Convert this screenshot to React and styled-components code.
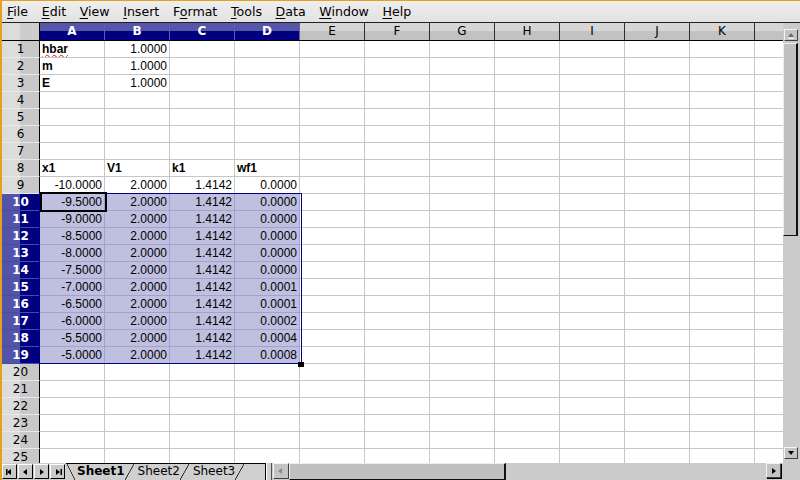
import React from "react";
import styled, { createGlobalStyle } from "styled-components";

// Spreadsheet window: menu bar, cell grid with headers, scrollbars, sheet tabs

const GlobalStyle = createGlobalStyle`
  html, body {
    margin: 0;
    padding: 0;
    width: 800px;
    height: 480px;
    overflow: hidden;
    background: #d4d4d4;
  }
  * {
    box-sizing: border-box;
  }
`;

const COLS = ["A", "B", "C", "D", "E", "F", "G", "H", "I", "J", "K", "L"];
const SEL_COLS = 4;
const SEL_FROM = 10;
const SEL_TO = 19;

const Window = styled.div`
  width: 800px;
  height: 480px;
  display: flex;
  flex-direction: column;
  border-top: 1px solid #e4a11b;
  border-left: 2px solid #e4a11b;
  background: #d2d2d2;
  overflow: hidden;
  font-family: "DejaVu Sans", sans-serif;
`;

const MenuBar = styled.div`
  height: 21px;
  flex: none;
  display: flex;
  align-items: center;
  padding-top: 1px;
  background: linear-gradient(#eeeeee, #e2e2e2);
  font-size: 12.6px;
  color: #000;
`;

const MenuItem = styled.span`
  padding: 0 6.8px;
  line-height: 16px;
  white-space: nowrap;
  &:first-child {
    padding-left: 5px;
  }
`;

const Key = styled.span`
  text-decoration: underline;
  text-underline-offset: 2px;
  text-decoration-thickness: 1px;
`;

const Main = styled.div`
  flex: 1;
  min-height: 0;
  display: flex;
  border-top: 1px solid #202020;
`;

const Sheet = styled.div`
  flex: 1;
  min-width: 0;
  position: relative;
  overflow: hidden;
  background: #ffffff;
`;

const HeaderRow = styled.div`
  display: flex;
  height: 18px;
  border-bottom: 1px solid #000;
`;

const Corner = styled.div`
  flex: none;
  width: 38px;
  height: 100%;
  border-right: 1px solid #000;
  background: linear-gradient(to right, #dcdcdc 50%, #cdcdcd 50%);
`;

const ColHeader = styled.div`
  flex: none;
  width: 65px;
  height: 100%;
  border-right: 1px solid ${(p) => (p.$sel ? "#5e5eae" : "#2e2e2e")};
  background: ${(p) =>
    p.$sel
      ? "linear-gradient(#5656a8 0 47%, #000080 47%)"
      : "linear-gradient(#d6d6d6 0 47%, #c2c2c2 47%)"};
  color: ${(p) => (p.$sel ? "#fff" : "#000")};
  font-weight: ${(p) => (p.$sel ? "bold" : "normal")};
  font-size: 12px;
  line-height: 17px;
  text-align: center;
`;

const Row = styled.div`
  display: flex;
  height: 17px;
`;

const RowHeader = styled.div`
  flex: none;
  width: 38px;
  height: 100%;
  border-right: 1px solid #000;
  border-bottom: 1px solid ${(p) => (p.$sel ? "#4a4aa0" : "#e8e8e8")};
  background: ${(p) =>
    p.$sel
      ? "linear-gradient(to right, #5353aa 50%, #000080 50%)"
      : "linear-gradient(to right, #dcdcdc 50%, #c8c8c8 50%)"};
  color: ${(p) => (p.$sel ? "#fff" : "#000")};
  font-weight: ${(p) => (p.$sel ? "bold" : "normal")};
  font-size: 12px;
  line-height: 16px;
  text-align: center;
`;

const Cell = styled.div`
  flex: none;
  width: 65px;
  height: 100%;
  padding: 0 2px 0 2px;
  border-right: 1px solid ${(p) => (p.$sel ? "#a3a3c9" : "#c6c6c6")};
  border-bottom: 1px solid ${(p) => (p.$sel ? "#a3a3c9" : "#c6c6c6")};
  background: ${(p) => (p.$sel ? "#bfbfdf" : "#fff")};
  font-family: "Liberation Sans", Arial, sans-serif;
  font-size: 12px;
  line-height: 16px;
  font-weight: ${(p) => (p.$bold ? "bold" : "normal")};
  text-align: ${(p) => (p.$right ? "right" : "left")};
  white-space: nowrap;
  overflow: hidden;
  color: #000;
`;

const Misspelt = styled.span`
  text-decoration: underline wavy #e01010;
  text-decoration-thickness: 1px;
  text-underline-offset: 1px;
`;

const SelectionFrame = styled.div`
  position: absolute;
  left: 37px;
  top: 170px;
  width: 263px;
  height: 171px;
  border: 1px solid #000080;
  pointer-events: none;
`;

const CursorBox = styled.div`
  position: absolute;
  left: 38px;
  top: 169px;
  width: 67px;
  height: 20px;
  border: 2px solid #000;
  pointer-events: none;
`;

const FillHandle = styled.div`
  position: absolute;
  left: 296px;
  top: 339px;
  width: 6px;
  height: 5px;
  background: #000;
`;

const VScroll = styled.div`
  flex: none;
  width: 17px;
  display: flex;
  flex-direction: column;
  align-items: flex-start;
  padding: 6px 0 4px 1px;
  background: #cbcbcb;
`;

const ArrowButton = styled.div`
  flex: none;
  width: ${(p) => p.$w || 14}px;
  height: ${(p) => p.$h || 12}px;
  display: flex;
  align-items: center;
  justify-content: center;
  background: #c4c4c4;
  border-top: 1px solid #f4f4f4;
  border-left: 1px solid #f4f4f4;
  border-right: 1px solid #404040;
  border-bottom: 1px solid #404040;
  box-shadow: ${(p) => (p.$heavy ? "1px 1px 0 #000" : "none")};
`;

const VThumb = styled.div`
  flex: none;
  width: 15px;
  height: 193px;
  margin: 2px 0 0 -1px;
  background: #c0c0c0;
  border-top: 1px solid #ededed;
  border-left: 1px solid #ededed;
  border-right: 2px solid #111;
  border-bottom: 1px solid #111;
`;

const Spacer = styled.div`
  flex: 1;
`;

const BottomBar = styled.div`
  flex: none;
  height: 17px;
  display: flex;
  background: #cfcfcf;
`;

const NavGroup = styled.div`
  flex: none;
  display: flex;
  align-items: flex-start;
  gap: 1px;
  width: 64px;
  padding-top: 1px;
`;

const NavButton = styled.div`
  flex: none;
  width: 15px;
  height: 15px;
  display: flex;
  align-items: center;
  justify-content: center;
  background: #cacaca;
  border-top: 1px solid #fff;
  border-left: 1px solid #fff;
  border-right: 1px solid #000;
  border-bottom: 1px solid #000;
`;

const TabStrip = styled.div`
  flex: none;
  width: 199px;
  display: flex;
  border-top: 1px solid #000;
`;

const Tab = styled.div`
  position: relative;
  flex: none;
  padding-left: ${(p) => (p.$first ? 11 : 13)}px;
  font-size: 12px;
  line-height: 15px;
  font-weight: ${(p) => (p.$active ? "bold" : "normal")};
  color: #000;
  &::before {
    content: "";
    display: ${(p) => (p.$first ? "block" : "none")};
    position: absolute;
    left: 1px;
    top: 0;
    width: 8px;
    height: 16px;
    background: linear-gradient(
      to bottom left,
      transparent calc(50% - 0.7px),
      #000 50%,
      transparent calc(50% + 0.7px)
    );
  }
  &::after {
    content: "";
    position: absolute;
    right: -9px;
    top: 0;
    width: 9px;
    height: 16px;
    background: linear-gradient(
      to bottom right,
      transparent calc(50% - 0.7px),
      #000 50%,
      transparent calc(50% + 0.7px)
    );
  }
`;

const Splitter = styled.div`
  flex: none;
  width: 7px;
  border-left: 1px solid #000;
  border-right: 1px solid #505050;
  box-shadow: inset 1px 0 0 #ffffff;
  background: #cfcfcf;
`;

const HScroll = styled.div`
  flex: 1;
  display: flex;
  align-items: flex-start;
  padding-left: 1px;
  background: #cbcbcb;
`;

const HThumb = styled.div`
  flex: none;
  width: 217px;
  height: 17px;
  background: #c0c0c0;
  border-top: 1px solid #ededed;
  border-left: 1px solid #ededed;
  border-right: 2px solid #111;
  border-bottom: 1px solid #111;
`;

const ScrollCorner = styled.div`
  flex: none;
  width: 17px;
  background: #cbcbcb;
`;

const Triangle = ({ dir, color = "#000", bar, emboss }) => {
  const shapes = {
    up: "1,6 4,2 7,6",
    down: "1,2 4,6 7,2",
    left: "5,1 1,4 5,7",
    right: "2,1 6,4 2,7",
  };
  return (
    <svg width="8" height="8" viewBox="0 0 8 8">
      {emboss && <polyline points="1,7 7,7" stroke="#fff" strokeWidth="1" fill="none" />}
      <polygon points={shapes[dir]} fill={color} />
      {bar === "left" && <rect x="0" y="1" width="1.5" height="6" fill={color} />}
      {bar === "right" && <rect x="6.5" y="1" width="1.5" height="6" fill={color} />}
    </svg>
  );
};

const sheetData = (() => {
  const data = {
    1: [{ t: "hbar", bold: true, spell: true }, { t: "1.0000", right: true }],
    2: [{ t: "m", bold: true }, { t: "1.0000", right: true }],
    3: [{ t: "E", bold: true }, { t: "1.0000", right: true }],
    8: [
      { t: "x1", bold: true },
      { t: "V1", bold: true },
      { t: "k1", bold: true },
      { t: "wf1", bold: true },
    ],
  };
  const wf = ["0.0000", "0.0000", "0.0000", "0.0000", "0.0000", "0.0000", "0.0001", "0.0001", "0.0002", "0.0004", "0.0008"];
  for (let r = 9; r <= 19; r++) {
    const x = -10 + 0.5 * (r - 9);
    data[r] = [
      { t: x.toFixed(4), right: true },
      { t: "2.0000", right: true },
      { t: "1.4142", right: true },
      { t: wf[r - 9], right: true },
    ];
  }
  return data;
})();

const MENUS = [
  ["", "F", "ile"],
  ["", "E", "dit"],
  ["", "V", "iew"],
  ["", "I", "nsert"],
  ["F", "o", "rmat"],
  ["", "T", "ools"],
  ["", "D", "ata"],
  ["", "W", "indow"],
  ["", "H", "elp"],
];

const App = () => {
  const rows = [];
  for (let r = 1; r <= 25; r++) {
    const rowSel = r >= SEL_FROM && r <= SEL_TO;
    const values = sheetData[r] || [];
    rows.push(
      <Row key={r}>
        <RowHeader $sel={rowSel}>{r}</RowHeader>
        {COLS.map((c, i) => {
          const v = values[i];
          const sel = rowSel && i < SEL_COLS;
          return (
            <Cell key={c} $sel={sel} $bold={v && v.bold} $right={v && v.right}>
              {v ? v.spell ? <Misspelt>{v.t}</Misspelt> : v.t : null}
            </Cell>
          );
        })}
      </Row>
    );
  }

  return (
    <Window>
      <GlobalStyle />
      <MenuBar>
        {MENUS.map(([pre, key, rest]) => (
          <MenuItem key={key + rest}>
            {pre}
            <Key>{key}</Key>
            {rest}
          </MenuItem>
        ))}
      </MenuBar>
      <Main>
        <Sheet>
          <HeaderRow>
            <Corner />
            {COLS.map((c, i) => (
              <ColHeader key={c} $sel={i < SEL_COLS}>
                {c}
              </ColHeader>
            ))}
          </HeaderRow>
          {rows}
          <SelectionFrame />
          <CursorBox />
          <FillHandle />
        </Sheet>
        <VScroll>
          <ArrowButton>
            <Triangle dir="up" color="#6a6a6a" emboss />
          </ArrowButton>
          <VThumb />
          <Spacer />
          <ArrowButton>
            <Triangle dir="down" />
          </ArrowButton>
        </VScroll>
      </Main>
      <BottomBar>
        <NavGroup>
          <NavButton>
            <Triangle dir="left" bar="left" />
          </NavButton>
          <NavButton>
            <Triangle dir="left" />
          </NavButton>
          <NavButton>
            <Triangle dir="right" />
          </NavButton>
          <NavButton>
            <Triangle dir="right" bar="right" />
          </NavButton>
        </NavGroup>
        <TabStrip>
          <Tab $first $active>
            Sheet1
          </Tab>
          <Tab>Sheet2</Tab>
          <Tab>Sheet3</Tab>
        </TabStrip>
        <Splitter />
        <HScroll>
          <ArrowButton $w={16} $h={16}>
            <Triangle dir="left" color="#8a8a8a" />
          </ArrowButton>
          <HThumb />
          <Spacer />
          <ArrowButton $w={15} $h={15} $heavy>
            <Triangle dir="right" />
          </ArrowButton>
          <Spacer style={{ flex: "0 0 2px" }} />
        </HScroll>
        <ScrollCorner />
      </BottomBar>
    </Window>
  );
};

export default App;
